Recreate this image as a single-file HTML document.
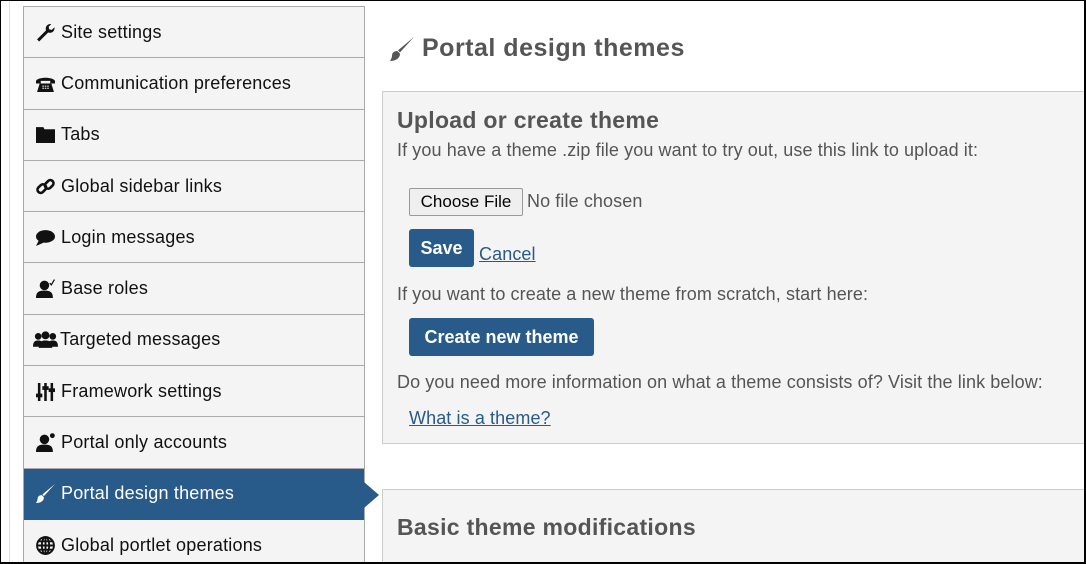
<!DOCTYPE html>
<html><head><meta charset="utf-8"><style>
*{box-sizing:border-box;margin:0;padding:0}
html,body{width:1086px;height:564px;overflow:hidden}
body{background:#fff;font-family:"Liberation Sans",sans-serif;position:relative;color:#222}
.frame{position:absolute;left:0;top:0;width:1086px;height:564px;border:1px solid #000;border-right:2px solid #000;border-bottom:2px solid #000;z-index:10;pointer-events:none}
.vline{position:absolute;left:9px;top:0;width:1px;height:564px;background:#ddd}
.side{position:absolute;left:23px;top:6px;width:342px;height:570px;border:1px solid #aaa;background:#f4f4f4}
.it{height:51.3px;border-bottom:1px solid #aaa;display:flex;align-items:center;padding-left:12px;font-size:18px;letter-spacing:.2px;color:#111;position:relative}
.it svg{width:19px;height:19px;margin-right:6px;flex:none}
.it.act{background:#285a8a;color:#fff;border-bottom-color:#285a8a}
.it.act:after{content:"";position:absolute;right:-15px;top:13px;border-left:15px solid #285a8a;border-top:13px solid transparent;border-bottom:13px solid transparent}
h1{position:absolute;left:390px;top:34px;font-size:25px;color:#555;font-weight:bold;letter-spacing:.5px;display:flex;align-items:center}
h1 svg{margin-right:8px}
.panel{position:absolute;left:382px;top:91px;width:710px;height:353px;background:#f4f4f4;border:1px solid #ccc}
.panel2{position:absolute;left:382px;top:489px;width:710px;height:100px;background:#f4f4f4;border:1px solid #ccc}
h2{font-size:23px;color:#555;font-weight:bold;position:absolute;left:14px;letter-spacing:.3px}
.t{position:absolute;left:14px;font-size:18px;color:#555;letter-spacing:.1px}
.btn{position:absolute;background:#285a8a;color:#fff;font-weight:bold;font-size:18px;border-radius:3px;display:flex;align-items:center;justify-content:center}
a{color:#285a8a}
</style></head><body>
<div class="vline"></div>
<div class="side">
<div class="it"><svg viewBox="0 0 18 18"><path d="M1 15.5l8.5-8.5c-1.2-3.5 1.5-6.5 5-6l-2.5 2.5 0.5 2.5 2.5 0.5 2.5-2.5c0.5 3.5-2.5 6.2-6 5l-8.5 8.5z" fill="#111"/></svg>Site settings</div>
<div class="it"><svg viewBox="0 0 18 18"><path d="M0 6.5c2-4 16-4 18 0v2.5h-4.5V6.5h-9V9H0z M3.5 9h11l2.5 8H1z" fill="#111"/><g fill="#f4f4f4"><rect x="6" y="11" width="1.5" height="1"/><rect x="8.3" y="11" width="1.5" height="1"/><rect x="10.6" y="11" width="1.5" height="1"/><rect x="6" y="13" width="1.5" height="1"/><rect x="8.3" y="13" width="1.5" height="1"/><rect x="10.6" y="13" width="1.5" height="1"/></g></svg>Communication preferences</div>
<div class="it"><svg viewBox="0 0 18 18"><path d="M0 2h7l1 2h10v13H0z" fill="#111"/></svg>Tabs</div>
<div class="it"><svg viewBox="0 0 18 18"><g fill="none" stroke="#111" stroke-width="2.5"><rect x="1" y="8" width="9" height="6" rx="3" transform="rotate(-45 5.5 11)"/><rect x="8" y="4" width="9" height="6" rx="3" transform="rotate(-45 12.5 7)"/></g></svg>Global sidebar links</div>
<div class="it"><svg viewBox="0 0 18 18"><ellipse cx="9" cy="8" rx="9" ry="6" fill="#111"/><path d="M3 11l-3 6 7-3z" fill="#111"/></svg>Login messages</div>
<div class="it"><svg viewBox="0 0 18 18"><circle cx="8" cy="6" r="4.5" fill="#111"/><path d="M0 18c0-6 3-7 8-7s8 1 8 7z" fill="#111"/><path d="M13 4l1.5 1.5 3-5" stroke="#111" stroke-width="1.2" fill="none"/></svg>Base roles</div>
<div class="it" style="padding-left:9px"><svg viewBox="0 0 24 18" style="width:25px;margin-right:2px"><g fill="#111"><circle cx="5" cy="6" r="3.2"/><circle cx="19" cy="6" r="3.2"/><circle cx="12" cy="5" r="3.8"/><path d="M0 16c0-5 2-6 5-6s5 1 5 6zM14 16c0-5 2-6 5-6s5 1 5 6zM5.5 17c0-6 3-7 6.5-7s6.5 1 6.5 7z"/></g></svg>Targeted messages</div>
<div class="it"><svg viewBox="0 0 18 18"><g stroke="#111" stroke-width="2.4"><path d="M3 1v17M9 1v17M15 1v17"/></g><g fill="#111"><rect x="0" y="11" width="6" height="3.5"/><rect x="6" y="4" width="6" height="3.5"/><rect x="12" y="6" width="6" height="3.5"/></g></svg>Framework settings</div>
<div class="it"><svg viewBox="0 0 18 18"><circle cx="8" cy="6" r="4.5" fill="#111"/><path d="M0 18c0-6 3-7 8-7s8 1 8 7z" fill="#111"/><circle cx="15.5" cy="2.5" r="2.3" fill="#111"/></svg>Portal only accounts</div>
<div class="it act"><svg viewBox="0 0 18 18"><path d="M18 0L7.5 11.5l-1.5-1.5zM5.5 10.5c-2.5 0-4 1.5-4 3.5S0.5 17 0 18c3.5 0 7.5-1.5 7.5-5.5z" fill="#fff"/></svg>Portal design themes</div>
<div class="it" style="border-bottom:none"><svg viewBox="0 0 18 18"><g fill="none" stroke="#111" stroke-width="1.8"><circle cx="9" cy="9" r="8"/><ellipse cx="9" cy="9" rx="3.5" ry="8"/><path d="M1 9h16M2.5 5h13M2.5 13h13M9 1v16"/></g></svg>Global portlet operations</div>
</div>
<h1><svg width="24" height="24" viewBox="0 0 18 18"><path d="M18 0L7.5 11.5l-1.5-1.5zM5.5 10.5c-2.5 0-4 1.5-4 3.5S0.5 17 0 18c3.5 0 7.5-1.5 7.5-5.5z" fill="#555"/></svg>Portal design themes</h1>
<div class="panel">
<h2 style="top:15px">Upload or create theme</h2>
<div class="t" style="top:48px">If you have a theme .zip file you want to try out, use this link to upload it:</div>
<div style="position:absolute;left:26px;top:96px;width:114px;height:28px;border:1px solid #999;background:#efefef;border-radius:2px;font-size:17px;display:flex;align-items:center;justify-content:center;color:#000">Choose File</div>
<div class="t" style="left:144px;top:99px">No file chosen</div>
<div class="btn" style="left:26px;top:137px;width:65px;height:38px">Save</div>
<div class="t" style="left:96px;top:152px"><a href="#">Cancel</a></div>
<div class="t" style="top:192px">If you want to create a new theme from scratch, start here:</div>
<div class="btn" style="left:26px;top:226px;width:185px;height:38px">Create new theme</div>
<div class="t" style="top:280px">Do you need more information on what a theme consists of? Visit the link below:</div>
<div class="t" style="left:26px;top:316px"><a href="#">What is a theme?</a></div>
</div>
<div class="panel2"><h2 style="top:24px">Basic theme modifications</h2></div>
<div class="frame"></div>
</body></html>
